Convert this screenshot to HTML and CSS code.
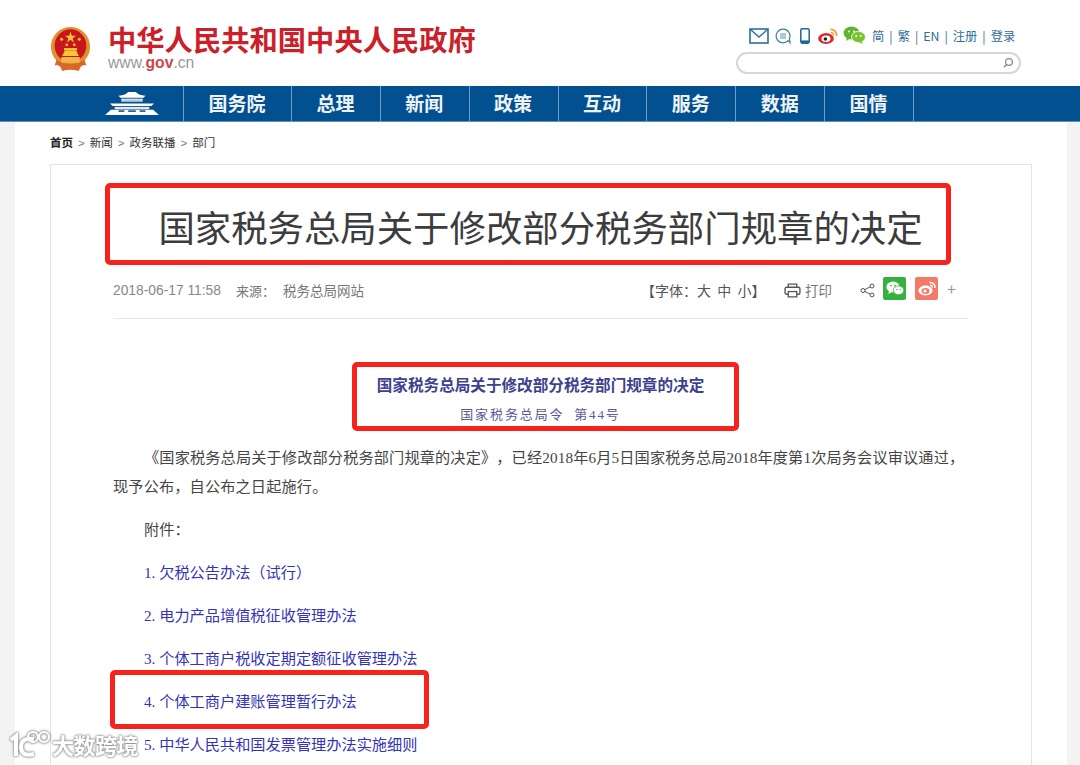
FILE: index.html
```html
<!DOCTYPE html>
<html lang="zh-CN">
<head>
    <meta charset="UTF-8">
    <title>国家税务总局关于修改部分税务部门规章的决定</title>
    <link rel="stylesheet" href="styles.css">
</head>
<body>
    <header class="top">
        <svg class="emblem" viewBox="0 0 44 48" preserveAspectRatio="none">
            <ellipse cx="22" cy="21" rx="21" ry="21" fill="#e0912f"/>
            <ellipse cx="22" cy="20" rx="17" ry="17.5" fill="#c8161d"/>
            <polygon points="22,5 23.4,9.4 28,9.4 24.3,12 25.7,16.4 22,13.7 18.3,16.4 19.7,12 16,9.4 20.6,9.4" fill="#f5c53a"/>
            <circle cx="12.5" cy="13" r="1.6" fill="#f5c53a"/>
            <circle cx="31.5" cy="13" r="1.6" fill="#f5c53a"/>
            <circle cx="18" cy="19" r="1.4" fill="#f5c53a"/>
            <circle cx="26" cy="19" r="1.4" fill="#f5c53a"/>
            <path d="M13 31 L16 25 H28 L31 31 Z" fill="#f5c53a"/>
            <rect x="15" y="22.5" width="14" height="2.5" fill="#f5c53a"/>
            <path d="M7 35 Q22 44 37 35 L39 41 Q33 39 31 47 Q22 44 13 47 Q11 39 5 41 Z" fill="#d8672a"/>
            <rect x="12" y="32" width="20" height="6" rx="1" fill="#efb64a"/>
        </svg>
        <div class="brand">
            <div class="brand-name">中华人民共和国中央人民政府</div>
            <div class="brand-url">www.<b>gov</b>.cn</div>
        </div>
        <div class="tools">
            <div class="tools-row">
                <svg class="ico-mail" viewBox="0 0 20 16"><rect x="1" y="1" width="18" height="14" fill="none" stroke="#2a6f9e" stroke-width="1.6"/><path d="M1.5 1.5 L10 9 L18.5 1.5" fill="none" stroke="#2a6f9e" stroke-width="1.4"/></svg>
                <svg class="ico-chat" viewBox="0 0 16 16"><path d="M8 1.2 A6.8 6.8 0 1 0 13 12.6 L15 14.6 L14.4 10.6 A6.8 6.8 0 0 0 8 1.2 Z" fill="none" stroke="#3f7fa6" stroke-width="1.2"/><path d="M5 6h6M5 8h6M5 10h6" stroke="#5f93b3" stroke-width="1"/></svg>
                <svg class="ico-phone" viewBox="0 0 10 16"><rect x="0.8" y="0.8" width="8.4" height="14.4" rx="1.4" fill="#fff" stroke="#1f6797" stroke-width="1.5"/><rect x="1" y="12.4" width="8" height="2.6" fill="#1f6797"/></svg>
                <svg class="ico-weibo" viewBox="0 0 20 16"><ellipse cx="8" cy="10.5" rx="7.8" ry="5.4" fill="#d9282a"/><ellipse cx="8" cy="10.8" rx="4.5" ry="3.2" fill="#fff"/><circle cx="7.4" cy="11" r="1.8" fill="#222"/><path d="M12.5 1.5 A5.5 5.5 0 0 1 18.5 8" fill="none" stroke="#ef9a2e" stroke-width="1.8"/><path d="M12.8 4.5 A2.8 2.8 0 0 1 15.6 7.6" fill="none" stroke="#ef9a2e" stroke-width="1.4"/></svg>
                <svg class="ico-wechat" viewBox="0 0 23 18"><ellipse cx="8.5" cy="7" rx="8" ry="6.5" fill="#63b32e"/><path d="M4 11 L3 15 L8 12 Z" fill="#63b32e"/><ellipse cx="15.5" cy="11" rx="7" ry="5.6" fill="#7cc331" stroke="#fff" stroke-width="0.8"/><path d="M18.5 15 L20 18 L15.5 16 Z" fill="#7cc331"/><circle cx="6" cy="5.5" r="1" fill="#fff"/><circle cx="11" cy="5.5" r="1" fill="#fff"/><circle cx="13.2" cy="10" r="0.9" fill="#fff"/><circle cx="17.8" cy="10" r="0.9" fill="#fff"/></svg>
                <div class="lang">
                    <a>简</a><i>|</i><a>繁</a><i>|</i><a>EN</a><i>|</i><a>注册</a><i>|</i><a>登录</a>
                </div>
            </div>
            <div class="search">
                <svg viewBox="0 0 12 12"><circle cx="7" cy="5" r="3.4" fill="none" stroke="#8a8a8a" stroke-width="1.2"/><path d="M4.6 7.5 L2 10.4" stroke="#8a8a8a" stroke-width="1.4"/></svg>
            </div>
        </div>
    </header>

    <nav class="nav">
        <div class="nav-logo">
            <svg viewBox="0 0 56 26">
                <path d="M14 5 Q22 4 24 1 H32 Q34 4 42 5 L40 7 H16 Z" fill="#fff"/>
                <rect x="17" y="8" width="22" height="3" fill="#fff"/>
                <rect x="18" y="9" width="20" height="1" fill="#7fa6c6"/>
                <path d="M5 13 H51 L48 15.5 H8 Z" fill="#fff"/>
                <rect x="10" y="16.5" width="36" height="2.5" fill="#dfe8f0"/>
                <path d="M6 19.5 H50 L56 25 H0 Z" fill="#fff"/>
                <path d="M14 21h6M24 21h8M36 21h6" stroke="#31648f" stroke-width="1.8"/>
            </svg>
        </div>
        <a class="nav-item nav-first">国务院</a>
        <a class="nav-item">总理</a>
        <a class="nav-item">新闻</a>
        <a class="nav-item">政策</a>
        <a class="nav-item">互动</a>
        <a class="nav-item">服务</a>
        <a class="nav-item">数据</a>
        <a class="nav-item">国情</a>
    </nav>

    <main class="page">
        <div class="crumb"><b>首页</b><span>&gt;</span>新闻<span>&gt;</span>政务联播<span>&gt;</span>部门</div>

        <section class="card">
            <h1 class="title">国家税务总局关于修改部分税务部门规章的决定</h1>

            <div class="meta">
                <span class="date">2018-06-17 11:58</span>
                <span class="source">来源：</span>
                <span class="origin">税务总局网站</span>
                <span class="fontsize">【字体：大&nbsp;&nbsp;中&nbsp;&nbsp;小】</span>
                <svg class="ico-print" viewBox="0 0 16 14"><path d="M4 4V1h8v3" fill="none" stroke="#555" stroke-width="1.2"/><rect x="1" y="4" width="14" height="6.5" rx="1.5" fill="none" stroke="#555" stroke-width="1.3"/><rect x="4" y="8" width="8" height="5" fill="#fff" stroke="#555" stroke-width="1.2"/></svg>
                <span class="print">打印</span>
                <svg class="ico-share" viewBox="0 0 15 15"><circle cx="3" cy="7.5" r="2" fill="none" stroke="#555"/><circle cx="12" cy="3" r="2" fill="none" stroke="#555"/><circle cx="12" cy="12" r="2" fill="none" stroke="#555"/><path d="M4.8 6.6 L10.2 3.9 M4.8 8.4 L10.2 11.1" stroke="#555"/></svg>
                <span class="badge badge-wechat">
                    <svg viewBox="0 0 18 15"><ellipse cx="7" cy="6" rx="6.6" ry="5.4" fill="#fff"/><path d="M3 9.5 L2.4 13 L6.5 10.5 Z" fill="#fff"/><ellipse cx="12.5" cy="9.3" rx="5.3" ry="4.4" fill="#fff" stroke="#35b13f" stroke-width="0.8"/><circle cx="5" cy="4.6" r="0.9" fill="#35b13f"/><circle cx="9" cy="4.6" r="0.9" fill="#35b13f"/><circle cx="10.8" cy="8.6" r="0.7" fill="#35b13f"/><circle cx="14.2" cy="8.6" r="0.7" fill="#35b13f"/></svg>
                </span>
                <span class="badge badge-weibo">
                    <svg viewBox="0 0 18 15"><ellipse cx="7.5" cy="9.5" rx="7" ry="5" fill="#fff"/><ellipse cx="7.5" cy="10" rx="4" ry="3" fill="#f47a68"/><circle cx="7" cy="10" r="1.6" fill="#fff"/><path d="M11.5 1.5 A5 5 0 0 1 17 7" fill="none" stroke="#fff" stroke-width="1.6"/><path d="M12 4.2 A2.4 2.4 0 0 1 14.4 6.8" fill="none" stroke="#fff" stroke-width="1.3"/></svg>
                </span>
                <span class="plus">+</span>
            </div>

            <div class="doc-head">
                <h2>国家税务总局关于修改部分税务部门规章的决定</h2>
                <p>国家税务总局令&nbsp;&nbsp;第<span class="num">44</span>号</p>
            </div>

            <div class="doc-body">
                <p class="indent lead">《国家税务总局关于修改部分税务部门规章的决定》，已经<span class="num">2018</span>年<span class="num">6</span>月<span class="num">5</span>日国家税务总局<span class="num">2018</span>年度第<span class="num">1</span>次局务会议审议通过，现予公布，自公布之日起施行。</p>
                <p class="indent">附件：</p>
                <p class="indent"><a><span class="idx">1.</span>欠税公告办法（试行）</a></p>
                <p class="indent"><a><span class="idx">2.</span>电力产品增值税征收管理办法</a></p>
                <p class="indent"><a><span class="idx">3.</span>个体工商户税收定期定额征收管理办法</a></p>
                <p class="indent"><a><span class="idx">4.</span>个体工商户建账管理暂行办法</a></p>
                <p class="indent"><a><span class="idx">5.</span>中华人民共和国发票管理办法实施细则</a></p>
            </div>

            <div class="mark mark-title"></div>
            <div class="mark mark-doc"></div>
            <div class="mark mark-item"></div>
        </section>
    </main>

    <div class="watermark">
        <svg viewBox="0 0 42 28"><path d="M2 10 L7 6 V26" fill="none" stroke="#fff" stroke-width="4"/><path d="M25 9 Q12 7 12 17 Q12 27 25 24" fill="none" stroke="#fff" stroke-width="4"/><circle cx="24" cy="7" r="5" fill="none" stroke="#fff" stroke-width="2.2"/><circle cx="35" cy="7" r="5" fill="none" stroke="#fff" stroke-width="2.2"/></svg>
        <span>大数跨境</span>
    </div>
</body>
</html>
```

FILE: styles.css
```css
* {
    box-sizing: border-box;
}
html, body {
    height: 765px;
    overflow: hidden;
}
body {
    margin: 0;
    position: relative;
    background-color: #f3f3f3;
    font-family: "Noto Sans CJK SC", sans-serif;
    color: #333;
    text-spacing-trim: space-all;
}
h1, h2, p {
    margin: 0;
    font-weight: normal;
}

/* top */
.top {
    display: flex;
    align-items: flex-start;
    height: 86px;
    padding: 27px 59px 0 50px;
    background-color: #fff;
}
.emblem {
    width: 41px;
    height: 45px;
}
.brand {
    margin-left: 17px;
}
.brand-name {
    margin-top: -4px;
    font-size: 28.3px;
    line-height: 31px;
    font-weight: 700;
    color: #cb1f2a;
    white-space: nowrap;
}
.brand-url {
    font-family: "Liberation Sans", sans-serif;
    font-size: 15.7px;
    line-height: 18px;
    color: #999;
}
.brand-url b {
    color: #c9484e;
}
.tools {
    width: 285px;
    margin-left: auto;
    margin-top: -1px;
}
.tools-row {
    display: flex;
    align-items: center;
    height: 20px;
    padding-left: 13px;
}
.ico-mail {
    width: 20px;
    height: 16px;
}
.ico-chat {
    width: 16px;
    height: 16px;
    margin-left: 6px;
}
.ico-phone {
    width: 10px;
    height: 16px;
    margin-left: 9px;
}
.ico-weibo {
    width: 20px;
    height: 16px;
    margin-left: 8px;
}
.ico-wechat {
    width: 23px;
    height: 18px;
    margin-left: 5px;
    margin-top: -3px;
}
.lang {
    display: flex;
    align-items: center;
    margin-left: 6px;
    font-size: 12.3px;
    color: #2f6c99;
    white-space: nowrap;
}
.lang a {
    display: block;
}
.lang i {
    margin: 0 5px;
    font-style: normal;
    color: #3b6f95;
}
.search {
    display: flex;
    align-items: center;
    justify-content: flex-end;
    height: 22px;
    margin-top: 6px;
    padding-right: 5px;
    background-color: #fff;
    border: 2px solid #d6d6d6;
    border-radius: 11px;
}
.search svg {
    width: 12px;
    height: 12px;
}

/* nav */
.nav {
    display: flex;
    height: 36px;
    padding-left: 100px;
    background-color: #02508f;
    border-bottom: 1px solid #5b90bd;
}
.nav-logo {
    width: 84px;
    padding: 5px 0 0 5px;
    border-right: 1px solid #6f9cc2;
}
.nav-logo svg {
    display: block;
    width: 54px;
    height: 25px;
}
.nav-item {
    width: 88.85px;
    padding-right: 1px;
    font-size: 19px;
    font-weight: 700;
    line-height: 34px;
    text-align: center;
    color: #eef3f8;
    border-right: 1px solid #6f9cc2;
}
.nav-first {
    width: 108px;
}

/* page */
.page {
    height: 643px;
    margin: 0 13px 0 15px;
    padding: 0 35px;
    background-color: #fff;
}
.crumb {
    height: 42px;
    font-size: 11.5px;
    line-height: 41px;
    color: #333;
}
.crumb b {
    color: #222;
}
.crumb span {
    margin: 0 5px;
    font-family: "Liberation Sans", sans-serif;
    color: #777;
}
.card {
    position: relative;
    width: 982px;
    height: 620px;
    padding: 0 63px 0 62px;
    border: 1px solid #e4e4e4;
}
.title {
    padding-top: 36px;
    font-size: 36.4px;
    line-height: 50px;
    text-align: center;
    color: #3c3c3c;
    white-space: nowrap;
}
.meta {
    display: flex;
    align-items: center;
    height: 68px;
    padding: 25px 0 14px;
    font-size: 13px;
    color: #777;
    border-bottom: 1px solid #e8e8e8;
}
.date {
    width: 123px;
    font-family: "Liberation Sans", sans-serif;
    font-size: 13.8px;
    color: #888;
}
.source {
    width: 47px;
}
.origin {
    width: 358px;
    font-size: 13.5px;
}
.fontsize {
    width: 143px;
    font-size: 14px;
    color: #555;
    white-space: nowrap;
}
.ico-print {
    width: 17px;
    height: 15px;
}
.print {
    width: 55px;
    margin-left: 4px;
    font-size: 13.5px;
}
.ico-share {
    width: 15px;
    height: 15px;
}
.badge {
    display: flex;
    align-items: center;
    justify-content: center;
    width: 23px;
    height: 23px;
    margin-top: -3px;
    border-radius: 2px;
}
.badge svg {
    width: 18px;
    height: 15px;
}
.badge-wechat {
    margin-left: 8px;
    background-color: #35b13f;
}
.badge-weibo {
    margin-left: 9px;
    background-color: #f47a68;
}
.plus {
    margin-left: 9px;
    margin-top: -5px;
    font-size: 16px;
    color: #999;
}
.doc-head {
    padding-top: 52px;
    text-align: center;
}
.doc-head h2 {
    font-size: 15.6px;
    line-height: 26px;
    font-weight: 700;
    color: #3f3f8f;
}
.doc-head p {
    margin-top: 7px;
    font-size: 13px;
    line-height: 20px;
    letter-spacing: 1.9px;
    color: #5a5a9c;
}
.doc-body {
    padding-top: 18px;
    font-size: 15.2px;
    line-height: 29px;
    color: #444;
}
.doc-body p {
    margin-bottom: 14px;
}
.doc-body .lead {
    letter-spacing: 0.13px;
}
.indent {
    text-indent: 31px;
}
.doc-body a {
    color: #3333b8;
}
/* digits are half width in the original, the serif font has that width */
.num, .idx {
    font-family: "Liberation Serif", serif;
    line-height: 1;
}
.idx {
    display: inline-block;
    width: 1em;
    text-indent: 0;
}

/* red annotation boxes */
.mark {
    position: absolute;
    border: 5px solid #f5231c;
    border-radius: 5px;
}
.mark-title {
    left: 54px;
    top: 18px;
    width: 846px;
    height: 82px;
}
.mark-doc {
    left: 301px;
    top: 197px;
    width: 387px;
    height: 69px;
}
.mark-item {
    left: 59px;
    top: 505px;
    width: 319px;
    height: 59px;
}

/* watermark */
.watermark {
    position: absolute;
    left: 9px;
    top: 730px;
    display: flex;
    align-items: center;
    filter: drop-shadow(0 0 1px #888) drop-shadow(0 0 1px #aaa);
}
.watermark svg {
    width: 42px;
    height: 28px;
}
.watermark span {
    margin-left: 1px;
    font-size: 22px;
    line-height: 28px;
    letter-spacing: -0.5px;
    font-weight: 700;
    color: #fff;
    white-space: nowrap;
}
```
